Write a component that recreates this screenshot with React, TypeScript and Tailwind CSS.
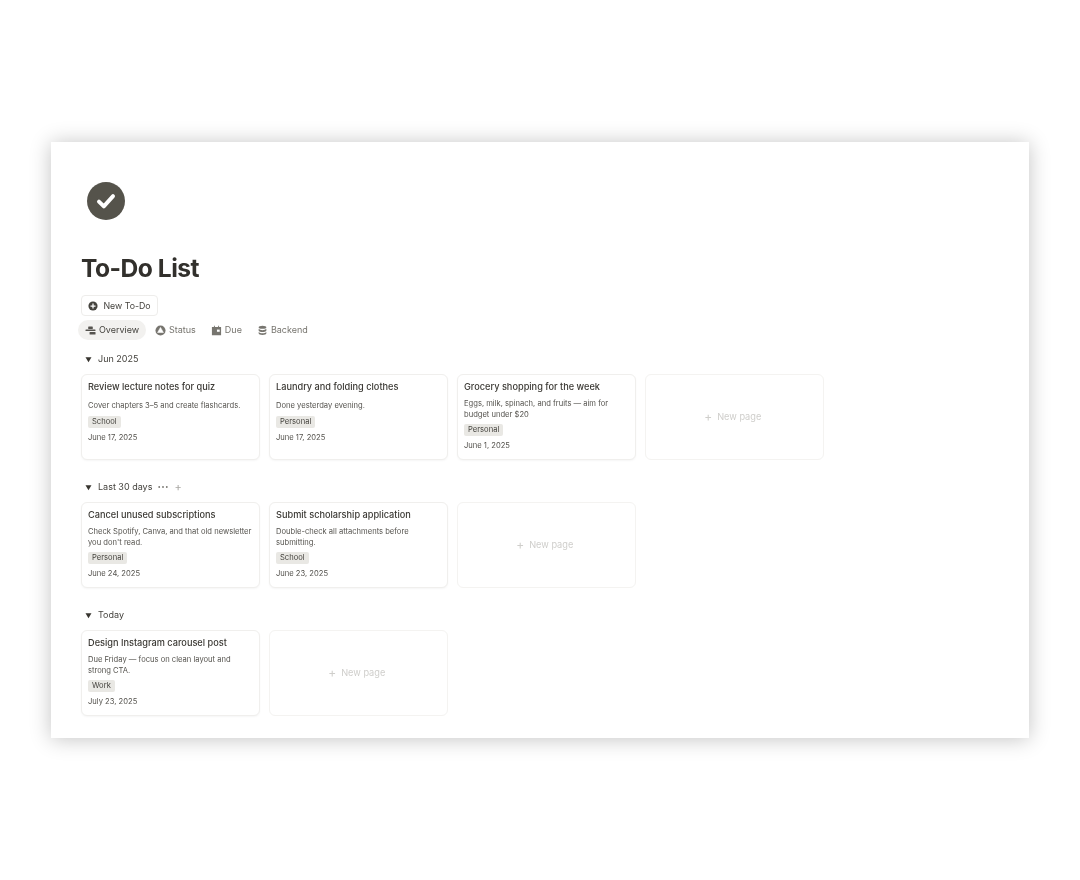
const todoGroups = [
  {
    label: "Jun 2025",
    extras: false,
    cards: [
      {
        title: "Review lecture notes for quiz",
        description: ["Cover chapters 3–5 and create flashcards."],
        tag: "School",
        date: "June 17, 2025",
      },
      {
        title: "Laundry and folding clothes",
        description: ["Done yesterday evening."],
        tag: "Personal",
        date: "June 17, 2025",
      },
      {
        title: "Grocery shopping for the week",
        description: ["Eggs, milk, spinach, and fruits — aim for", "budget under $20"],
        tag: "Personal",
        date: "June 1, 2025",
      },
    ],
  },
  {
    label: "Last 30 days",
    extras: true,
    cards: [
      {
        title: "Cancel unused subscriptions",
        description: ["Check Spotify, Canva, and that old newsletter", "you don't read."],
        tag: "Personal",
        date: "June 24, 2025",
      },
      {
        title: "Submit scholarship application",
        description: ["Double-check all attachments before", "submitting."],
        tag: "School",
        date: "June 23, 2025",
      },
    ],
  },
  {
    label: "Today",
    extras: false,
    cards: [
      {
        title: "Design Instagram carousel post",
        description: ["Due Friday — focus on clean layout and", "strong CTA."],
        tag: "Work",
        date: "July 23, 2025",
      },
    ],
  },
];

const OverviewIcon = () => (
  <svg viewBox="0 0 12 12" className="size-[11px]" fill="#55534e">
    <rect x="3.5" y="1.5" width="5" height="2.8" rx="0.6" />
    <rect x="0.5" y="5" width="11" height="1.6" rx="0.5" />
    <rect x="5" y="7.6" width="6.5" height="2.8" rx="0.6" />
  </svg>
);

const StatusIcon = () => (
  <svg viewBox="0 0 12 12" className="size-[11px]">
    <circle cx="6" cy="6" r="5.5" fill="#77756f" />
    <path d="M6 2.6 L9.2 8.2 H2.8 Z" fill="#fff" stroke="#fff" strokeWidth="0.6" strokeLinejoin="round" />
  </svg>
);

const DueIcon = () => (
  <svg viewBox="0 0 12 12" className="size-[11px]" fill="#77756f">
    <path d="M1 2.2h2.2V.9h1v1.3h3.6V.9h1v1.3H11v8.9H1z" />
    <rect x="6.5" y="5" width="3" height="2.4" fill="#fff" />
  </svg>
);

const BackendIcon = () => (
  <svg viewBox="0 0 12 12" className="size-[11px]" fill="#77756f">
    <ellipse cx="6" cy="2.4" rx="4.2" ry="1.7" />
    <path d="M1.8 4.2c.8 1 2.4 1.4 4.2 1.4s3.4-.4 4.2-1.4v1.7c0 1-1.9 1.7-4.2 1.7s-4.2-.7-4.2-1.7z" />
    <path d="M1.8 7.6c.8 1 2.4 1.4 4.2 1.4s3.4-.4 4.2-1.4v1.5c0 1-1.9 1.8-4.2 1.8s-4.2-.8-4.2-1.8z" />
  </svg>
);

const tabs = [
  { label: "Status", icon: <StatusIcon /> },
  { label: "Due", icon: <DueIcon /> },
  { label: "Backend", icon: <BackendIcon /> },
];

type Todo = (typeof todoGroups)[number]["cards"][number];

const TodoCard = ({ todo }: { todo: Todo }) => {
  // one-line descriptions sit a little lower in the card
  const twoLines = todo.description.length > 1;
  return (
    <div className="w-[178.5px] h-[86px] shrink-0 rounded-[6px] border border-[#f0efed] bg-white shadow-[0_1px_2px_rgba(0,0,0,0.04)] px-[6px] pt-[5px]">
      <h3 className="text-[9.2px] leading-[13px] font-medium text-[#3b3934] whitespace-nowrap">{todo.title}</h3>
      <div className={`${twoLines ? "mt-[5px]" : "mt-[7px]"} text-[7.6px] leading-[11px] text-[#55534e] whitespace-nowrap`}>
        {todo.description.map((line) => (
          <p key={line}>{line}</p>
        ))}
      </div>
      <span className={`${twoLines ? "mt-[4px]" : "mt-[4.5px]"} block h-[12px] w-fit rounded-[2px] bg-[#e9e8e4] px-[4px] text-[7.6px] leading-[12px] text-[#45433e]`}>
        {todo.tag}
      </span>
      <p className="mt-[4px] text-[7.6px] leading-[11px] text-[#55534e]">{todo.date}</p>
    </div>
  );
};

const NewPageCard = () => (
  <div className="w-[178.5px] h-[86px] shrink-0 rounded-[6px] border border-[#f4f3f1] bg-white flex items-center justify-center gap-[5px] pr-[3px] text-[9.2px] text-[#cfcecb]">
    <span className="text-[12px] leading-none">+</span>
    <span>New page</span>
  </div>
);

export default function App() {
  return (
    <div className="min-h-[880px] bg-white pt-[142px] pl-[51px] font-['Inter',sans-serif] blur-[0.5px]">
      <div className="w-[978px] h-[596px] bg-white pl-[30px] pt-[40px] shadow-[0_1px_20px_rgba(0,0,0,0.24)]">
        <div className="ml-[6px] flex size-[38px] items-center justify-center rounded-full bg-[#55534b]">
          <svg viewBox="0 0 24 24" className="size-[26px]" fill="none" stroke="#fff" strokeWidth="3.6" strokeLinecap="round" strokeLinejoin="round">
            <path d="M5.5 12.5 L10 17 L18.5 7.5" />
          </svg>
        </div>

        <h1 className="mt-[32px] text-[24.6px] leading-[32px] font-bold tracking-[-0.5px] text-[#32302c]">To-Do List</h1>

        <button className="mt-[11px] flex h-[21px] w-[77px] items-center justify-center gap-[5px] rounded-[4px] border border-[#eeedeb] bg-white text-[8.8px] text-[#45433e]">
          <svg viewBox="0 0 12 12" className="size-[10px]">
            <circle cx="6" cy="6" r="5.5" fill="#45433e" />
            <path d="M6 3v6M3 6h6" stroke="#fff" strokeWidth="1.5" />
          </svg>
          New To-Do
        </button>

        <div className="mt-[4px] -ml-[3px] flex h-[20px] items-center text-[9px]">
          <div className="flex h-[20px] w-[68px] items-center justify-center gap-[3px] rounded-full bg-[#f2f1ef] text-[#45433e]">
            <OverviewIcon />
            <span>Overview</span>
          </div>
          <div className="ml-[9px] flex items-center gap-[15px] text-[#77756f]">
            {tabs.map((tab) => (
              <div key={tab.label} className="flex items-center gap-[3px]">
                {tab.icon}
                <span>{tab.label}</span>
              </div>
            ))}
          </div>
        </div>

        <div className="mt-[10px] flex flex-col gap-[18px]">
          {todoGroups.map((group) => (
            <section key={group.label}>
              <div className="flex h-[18px] items-center pl-[4px] text-[9px] text-[#45433e]">
                <svg viewBox="0 0 8 8" className="size-[7px]" fill="#37352f">
                  <path d="M0.6 1.4 H7.4 L4 7 Z" />
                </svg>
                <span className="ml-[6px]">{group.label}</span>
                {group.extras && (
                  <>
                    <svg viewBox="0 0 10 4" className="ml-[6px] h-[4px] w-[10px]" fill="#77756f">
                      <circle cx="1.2" cy="2" r="0.9" />
                      <circle cx="5" cy="2" r="0.9" />
                      <circle cx="8.8" cy="2" r="0.9" />
                    </svg>
                    <span className="ml-[6px] text-[11px] leading-none text-[#a8a7a3]">+</span>
                  </>
                )}
              </div>
              <div className="mt-[6px] flex gap-[9.5px]">
                {group.cards.map((todo) => (
                  <TodoCard key={todo.title} todo={todo} />
                ))}
                <NewPageCard />
              </div>
            </section>
          ))}
        </div>
      </div>
    </div>
  );
}
